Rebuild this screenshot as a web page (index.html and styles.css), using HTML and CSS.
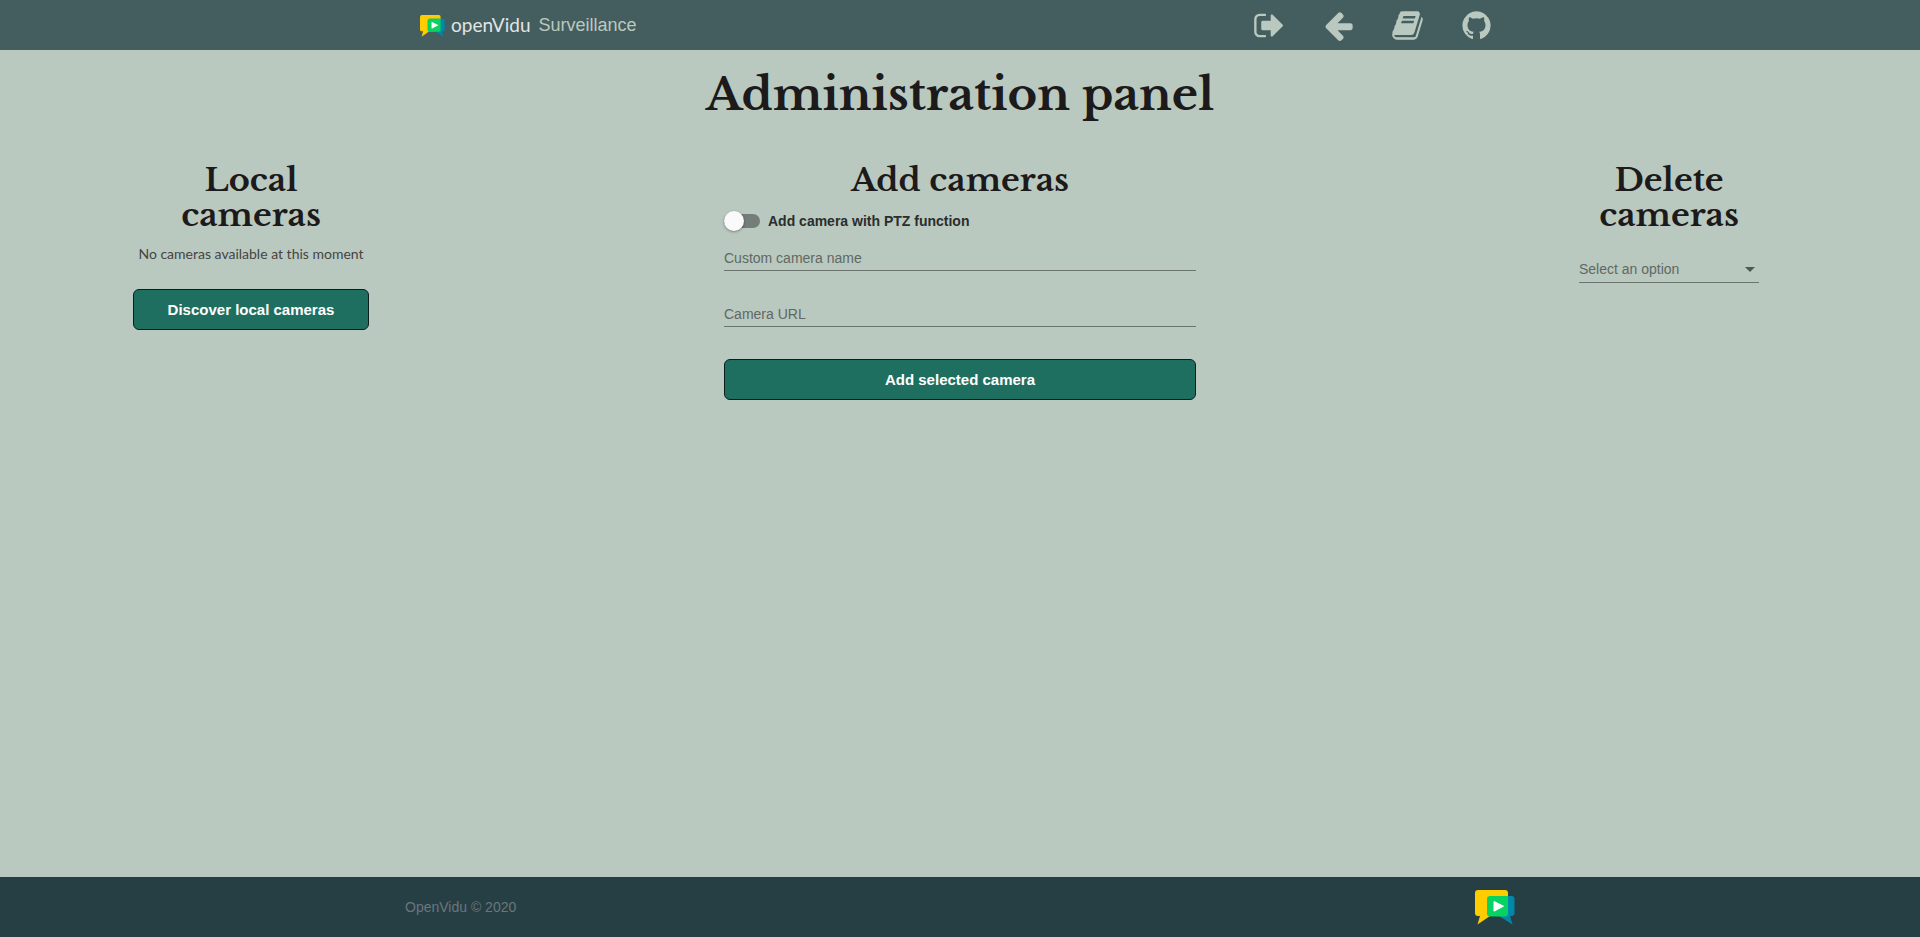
FILE: index.html
```html
<!DOCTYPE html>
<html lang="en">
<head>
<meta charset="utf-8">
<title>OpenVidu Surveillance</title>
<link rel="stylesheet" href="styles.css">
</head>
<body>
<header class="topbar">
  <div class="container topbar-inner">
    <a class="brand" href="#">
      <svg class="brand-mark" viewBox="0 0 40 35" aria-hidden="true">
        <path fill="#ffcc00" d="M3 0h27a3 3 0 0 1 3 3v20a3 3 0 0 1-3 3H15L2.500 34.500 5 26H3a3 3 0 0 1-3-3V3a3 3 0 0 1 3-3z"/>
        <path fill="#0088aa" d="M15 6h21.500a3 3 0 0 1 3 3v14a3 3 0 0 1-3 3H35l2.500 8.500L24 26z"/>
        <path fill="#06d362" d="M15 6h18v17a3 3 0 0 1-3 3.500H15a3 3 0 0 1-3-3V9a3 3 0 0 1 3-3z"/>
        <path fill="#fff" stroke="#fff" stroke-linejoin="round" d="M19 11.500l9.500 4.700-9.500 5z"/>
      </svg>
      <span class="brand-word">openVidu</span>
      <span class="brand-title">Surveillance</span>
    </a>
    <nav class="actions">
      <a href="#" aria-label="Log out"><svg class="icon" viewBox="0 0 1792 1792"><path d="M704 1440q0 4 1 20t.5 26.500-3 23.500-10 19.500-20.500 6.500h-320q-119 0-203.500-84.500t-84.500-203.500v-704q0-119 84.500-203.500t203.500-84.500h320q13 0 22.500 9.500t9.500 22.500q0 4 1 20t.5 26.500-3 23.500-10 19.500-20.500 6.500h-320q-66 0-113 47t-47 113v704q0 66 47 113t113 47h312l11.500 1 11.500 3 8 5.500 7 9 2 13.500zm928-544q0 26-19 45l-544 544q-19 19-45 19t-45-19-19-45v-288h-448q-26 0-45-19t-19-45v-384q0-26 19-45t45-19h448v-288q0-26 19-45t45-19 45 19l544 544q19 19 19 45z"/></svg></a>
      <a href="#" aria-label="Back"><svg class="icon" viewBox="0 0 1792 1792"><path d="M1664 896v128q0 53-32.500 90.500t-84.500 37.500h-704l293 294q38 36 38 90t-38 90l-75 76q-37 37-90 37-52 0-91-37l-651-652q-37-37-37-90 0-52 37-91l651-650q38-38 91-38 52 0 90 38l75 74q38 38 38 91t-38 91l-293 293h704q52 0 84.500 37.500t32.500 90.500z"/></svg></a>
      <a href="#" aria-label="Documentation"><svg class="icon" viewBox="0 0 1792 1792"><path d="M1703 478q40 57 18 129l-275 906q-19 64-76.500 107.500t-122.500 43.500h-923q-77 0-148.500-53.500t-99.500-131.500q-24-67-2-127 0-4 3-27t4-37q1-8-3-21.500t-3-19.500q2-11 8-21t16.500-23.500 16.500-23.500q23-38 45-91.500t30-91.500q3-10 .5-30t-.5-28q3-11 17-28t17-23q21-36 42-92t25-90q1-9-2.500-32t.5-28q4-13 22-30.500t22-22.500q19-26 42.500-84.500t27.500-96.500q1-8-3-25.500t-2-26.500q2-8 9-18t18-23 17-21q8-12 16.500-30.500t15-35 16-36 19.500-32 26.500-23.500 36-11.500 47.500 5.500l-1 3q38-9 51-9h761q74 0 114 56t18 130l-274 906q-36 119-71.500 153.500t-128.500 34.500h-869q-27 0-38 15-11 16-1 43 24 70 144 70h923q29 0 56-15.500t35-41.500l300-987q7-22 5-57 38 15 59 43zm-1064 2q-4 13 2 22.500t20 9.500h608q13 0 25.500-9.500t16.500-22.500l21-64q4-13-2-22.500t-20-9.500h-608q-13 0-25.500 9.500t-16.500 22.500zm-83 256q-4 13 2 22.500t20 9.500h608q13 0 25.500-9.500t16.500-22.500l21-64q4-13-2-22.500t-20-9.500h-608q-13 0-25.500 9.500t-16.500 22.500z"/></svg></a>
      <a href="#" aria-label="GitHub"><svg class="icon" viewBox="0 0 1792 1792"><path d="M896 128q209 0 385.500 103t279.500 279.500 103 385.500q0 251-146.500 451.500t-378.500 277.500q-27 5-40-7t-13-30q0-3 .5-76.500t.5-134.500q0-97-52-142 57-6 102.500-18t94-39 81-66.500 53-105 20.500-150.500q0-119-79-206 37-91-8-204-28-9-81 11t-92 44l-38 24q-93-26-192-26t-192 26q-16-11-42.500-27t-83.500-38.500-85-13.500q-45 113-8 204-79 87-79 206 0 85 20.500 150t52.500 105 80.500 67 94 39 102.500 18q-39 36-49 103-21 10-45 15t-57 5-65.500-21.500-55.500-62.500q-19-32-48.500-52t-49.500-24l-20-3q-21 0-29 4.500t-5 11.500 9 14 13 12l7 5q22 10 43.500 38t31.500 51l10 23q13 38 44 61.500t67 30 69.500 7 55.500-3.500l23-4q0 38 .5 88.500t.5 54.500q0 18-13 30t-40 7q-232-77-378.500-277.500t-146.500-451.500q0-209 103-385.500t279.500-279.500 385.500-103z"/></svg></a>
    </nav>
  </div>
</header>
<main class="panel">
  <h1 class="page-title">Administration panel</h1>
  <div class="columns">
    <section class="column column-side">
      <h2 class="section-title">Local cameras</h2>
      <p class="notice">No cameras available at this moment</p>
      <button class="btn" type="button">Discover local cameras</button>
    </section>
    <form class="column column-main">
      <h2 class="section-title">Add cameras</h2>
      <label class="toggle"><input class="toggle-input" type="checkbox" role="switch">Add camera with PTZ function</label>
      <input class="field" type="text" placeholder="Custom camera name" aria-label="Custom camera name">
      <input class="field" type="text" placeholder="Camera URL" aria-label="Camera URL">
      <button class="btn" type="button">Add selected camera</button>
    </form>
    <section class="column column-side">
      <h2 class="section-title">Delete cameras</h2>
      <div class="select-wrap">
        <select class="select" aria-label="Camera to delete"><option>Select an option</option></select>
        <svg class="select-arrow" viewBox="0 0 10 5" aria-hidden="true"><path d="M0 0h10L5 5z"/></svg>
      </div>
    </section>
  </div>
</main>
<footer class="footer">
  <div class="container footer-inner">
    <span class="copyright">OpenVidu © 2020</span>
    <svg class="footer-mark" viewBox="0 0 40 35" aria-hidden="true">
      <path fill="#ffcc00" d="M3 0h27a3 3 0 0 1 3 3v20a3 3 0 0 1-3 3H15L2.500 34.500 5 26H3a3 3 0 0 1-3-3V3a3 3 0 0 1 3-3z"/>
      <path fill="#0088aa" d="M15 6h21.500a3 3 0 0 1 3 3v14a3 3 0 0 1-3 3H35l2.500 8.500L24 26z"/>
      <path fill="#06d362" d="M15 6h18v17a3 3 0 0 1-3 3.500H15a3 3 0 0 1-3-3V9a3 3 0 0 1 3-3z"/>
      <path fill="#fff" stroke="#fff" stroke-linejoin="round" d="M19 11.500l9.500 4.700-9.500 5z"/>
    </svg>
  </div>
</footer>
</body>
</html>
```
FILE: styles.css
```css
* { box-sizing: border-box; }

body {
  margin: 0;
  min-height: 100vh;
  display: flex;
  flex-direction: column;
  background: #bac9bf;
  color: #1c1a1a;
  font-family: "Liberation Sans", Arial, sans-serif;
  font-size: 14px;
}

.container {
  width: 100%;
  max-width: 1140px;
  margin: 0 auto;
  padding: 0 15px;
}

.topbar { background: #445d5e; }

.topbar-inner {
  height: 50px;
  display: flex;
  align-items: center;
  justify-content: space-between;
  padding: 0 37px 0 30px;
}

.brand {
  display: flex;
  align-items: center;
  text-decoration: none;
  color: #bac9bf;
}

.brand-mark { width: 25px; height: 22px; margin-top: 2px; }

.brand-word {
  margin: 0 8px 0 6px;
  color: #e0e6e6;
  font-family: Lato, sans-serif;
  font-size: 19px;
  line-height: 22px;
}

.brand-title { font-size: 18px; }

.actions { display: flex; gap: 36px; }
.actions a { display: flex; }

.icon { width: 33px; height: 33px; fill: #bac9bf; }

.panel { flex: 1; }

.page-title,
.section-title {
  margin: 0;
  font-family: "Libre Baskerville", "Liberation Serif", serif;
  font-weight: bold;
  text-align: center;
}

.page-title {
  padding: 16px 0;
  font-size: 45px;
  line-height: 56px;
}

.columns {
  display: flex;
  justify-content: space-between;
  align-items: flex-start;
  padding: 25px 133px;
}

.column {
  display: flex;
  flex-direction: column;
  align-items: center;
}

.column-side { width: 236px; }
.column-main { width: 472px; align-items: stretch; }

.section-title { font-size: 32px; line-height: 35px; }
.column-side .section-title { width: 180px; }

.notice {
  margin: 11px 0 25px;
  font-family: Lato, sans-serif;
  line-height: 20px;
  color: #444;
}

.btn {
  width: 100%;
  height: 41px;
  border: 1px solid #0a1f1c;
  border-radius: 6px;
  background: #1f6f61;
  color: #fff;
  font: bold 15px "Liberation Sans", Arial, sans-serif;
}

.toggle {
  display: flex;
  align-items: center;
  gap: 8px;
  margin-top: 11px;
  height: 24px;
  font-weight: bold;
  color: #2b2d2c;
}

.toggle-input {
  appearance: none;
  position: relative;
  width: 36px;
  height: 14px;
  margin: 0;
  border-radius: 8px;
  background: #747d77;
}

.toggle-input::before {
  content: "";
  position: absolute;
  left: 0;
  top: -3px;
  width: 20px;
  height: 20px;
  border-radius: 50%;
  background: #fafafa;
  box-shadow: 0 1px 3px rgba(0, 0, 0, 0.35);
}

.field {
  height: 24px;
  margin: 14px 0 18px;
  padding: 0 0 2px;
  border: 0;
  border-bottom: 1px solid #6b746f;
  background: transparent;
  font: 14px "Liberation Sans", Arial, sans-serif;
}

.field::placeholder { color: #5f6863; opacity: 1; }
.column-main .btn { margin-top: 14px; }

.select-wrap {
  position: relative;
  width: 180px;
  margin-top: 22px;
}

.select {
  appearance: none;
  display: block;
  width: 100%;
  height: 28px;
  padding: 0 20px 0 0;
  border: 0;
  border-bottom: 1px solid #6b746f;
  border-radius: 0;
  background: transparent;
  color: #5f6863;
  font: 14px "Liberation Sans", Arial, sans-serif;
}

.select-arrow {
  position: absolute;
  right: 4px;
  top: 12px;
  width: 10px;
  height: 5px;
  fill: #4f5853;
  pointer-events: none;
}

.footer { background: #263f44; }

.footer-inner {
  height: 60px;
  display: flex;
  align-items: center;
  justify-content: space-between;
}

.copyright { color: #6c757d; }
.footer-mark { width: 40px; height: 35px; }
```
